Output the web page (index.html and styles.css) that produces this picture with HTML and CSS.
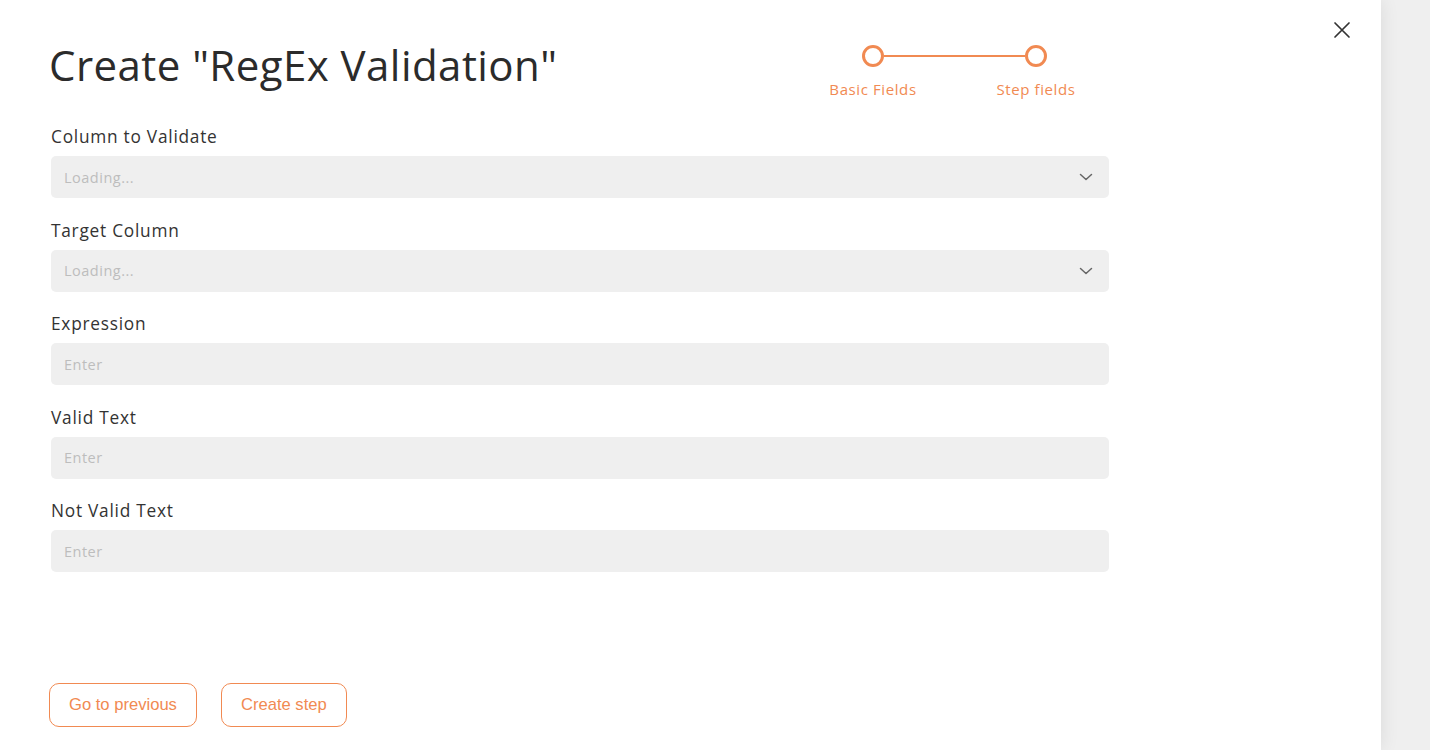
FILE: index.html
```html
<!DOCTYPE html>
<html lang="en">
<head>
<meta charset="utf-8">
<title>Create RegEx Validation</title>
<link rel="stylesheet" href="styles.css">
</head>
<body>
<div class="page">
  <div class="modal">
    <button class="close" aria-label="Close">
      <svg width="18" height="18" viewBox="0 0 18 18"><path d="M2 2 L16 16 M16 2 L2 16" stroke="#333" stroke-width="1.7" fill="none" stroke-linecap="round"/></svg>
    </button>
    <div class="header">
      <h1 class="title">Create "RegEx Validation"</h1>
      <div class="stepper">
        <div class="track">
          <span class="dot"></span>
          <span class="line"></span>
          <span class="dot"></span>
        </div>
        <div class="labels">
          <span>Basic Fields</span>
          <span>Step fields</span>
        </div>
      </div>
    </div>
    <div class="form">
      <div class="field">
        <label class="label">Column to Validate</label>
        <div class="input select"><span class="ph">Loading...</span>
          <svg class="chev" width="14" height="8" viewBox="0 0 14 8"><path d="M1.5 1.5 L7 6.5 L12.5 1.5" stroke="#666" stroke-width="1.5" fill="none" stroke-linecap="round" stroke-linejoin="round"/></svg>
        </div>
      </div>
      <div class="field">
        <label class="label">Target Column</label>
        <div class="input select"><span class="ph">Loading...</span>
          <svg class="chev" width="14" height="8" viewBox="0 0 14 8"><path d="M1.5 1.5 L7 6.5 L12.5 1.5" stroke="#666" stroke-width="1.5" fill="none" stroke-linecap="round" stroke-linejoin="round"/></svg>
        </div>
      </div>
      <div class="field">
        <label class="label">Expression</label>
        <div class="input"><span class="ph">Enter</span></div>
      </div>
      <div class="field">
        <label class="label">Valid Text</label>
        <div class="input"><span class="ph">Enter</span></div>
      </div>
      <div class="field">
        <label class="label">Not Valid Text</label>
        <div class="input"><span class="ph">Enter</span></div>
      </div>
    </div>
    <div class="footer">
      <button class="btn">Go to previous</button>
      <button class="btn">Create step</button>
    </div>
  </div>
  <div class="backdrop"></div>
</div>
</body>
</html>
```
FILE: styles.css
```css
* { box-sizing: border-box; }
html, body { margin: 0; padding: 0; }
body {
  font-family: "Open Sans", "DejaVu Sans", sans-serif;
  color: #2d2d2d;
  background: #efefef;
}
.page {
  display: flex;
  width: 1430px;
  height: 750px;
  overflow: hidden;
}
.modal {
  position: relative;
  width: 1381px;
  height: 750px;
  background: #fff;
  box-shadow: 0 0 18px rgba(0,0,0,0.09);
  display: flex;
  flex-direction: column;
  padding: 40px 0 23px 49px;
  z-index: 1;
}
.backdrop { flex: 1; background: #efefef; }
.close {
  position: absolute;
  top: 21px;
  left: 1333px;
  width: 18px;
  height: 18px;
  padding: 0;
  border: 0;
  background: none;
  display: flex;
}
.header {
  display: flex;
  width: 1060px;
  height: 85px;
}
.title {
  margin: 0;
  font-weight: 400;
  font-size: 42px;
  line-height: 50px;
  color: #2b2b2b;
  letter-spacing: 0.45px;
}
.stepper {
  margin-left: auto;
  margin-right: 23px;
  margin-top: 5px;
  display: flex;
  flex-direction: column;
  width: 263px;
}
.track {
  display: flex;
  align-items: center;
  padding-left: 39px;
}
.dot {
  width: 22px;
  height: 22px;
  border: 3.5px solid #f18a52;
  border-radius: 50%;
  background: #fff;
}
.line {
  width: 141px;
  height: 2px;
  background: #f18a52;
}
.labels {
  display: grid;
  grid-template-columns: 100px 100px;
  column-gap: 63px;
  margin-top: 12px;
  text-align: center;
  font-size: 15px;
  letter-spacing: 0.6px;
  line-height: 20px;
  color: #f18a52;
  white-space: nowrap;
  justify-items: center;
}
.form {
  display: flex;
  flex-direction: column;
  gap: 20.5px;
  width: 1060px;
  padding-left: 2px;
}
.field { display: flex; flex-direction: column; }
.label {
  font-size: 17.3px;
  letter-spacing: 0.75px;
  line-height: 24px;
  color: #333;
  margin-bottom: 7px;
}
.input {
  height: 42px;
  border-radius: 5px;
  background: #efefef;
  display: flex;
  align-items: center;
  padding: 0 16px 0 13px;
}
.ph {
  font-size: 14.5px;
  letter-spacing: 0.5px;
  color: #bdbdbd;
}
.chev { margin-left: auto; }
.footer {
  margin-top: auto;
  display: flex;
  gap: 24px;
}
.btn {
  height: 44px;
  padding: 0 19px;
  border: 1px solid #f18a52;
  border-radius: 10px;
  background: #fff;
  color: #f18a52;
  font-family: "Liberation Sans", Arial, sans-serif;
  font-size: 16.6px;
}
```
